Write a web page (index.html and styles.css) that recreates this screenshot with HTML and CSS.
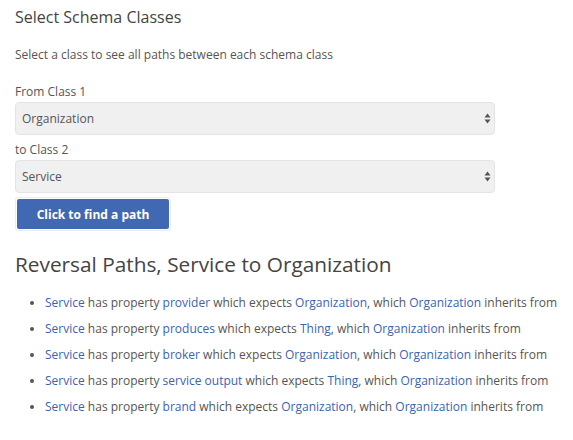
FILE: index.html
```html
<!DOCTYPE html>
<html>
<head>
<meta charset="utf-8">
<link rel="stylesheet" href="styles.css">
</head>
<body>
<div class="page">
  <h3 class="title">Select Schema Classes</h3>
  <p class="intro">Select a class to see all paths between each schema class</p>
  <label class="lbl">From Class 1</label>
  <div class="sel-wrap">
    <select class="sel"><option>Organization</option></select>
    <svg class="arrows" width="7" height="11" viewBox="0 0 7 11"><path d="M3.5 0.5 L6.5 4.5 H0.5 Z M3.5 10.5 L6.5 6.5 H0.5 Z" fill="#555"/></svg>
  </div>
  <label class="lbl lbl2">to Class 2</label>
  <div class="sel-wrap">
    <select class="sel"><option>Service</option></select>
    <svg class="arrows" width="7" height="11" viewBox="0 0 7 11"><path d="M3.5 0.5 L6.5 4.5 H0.5 Z M3.5 10.5 L6.5 6.5 H0.5 Z" fill="#555"/></svg>
  </div>
  <div class="btn-ring"><button class="btn">Click to find a path</button></div>
  <h2 class="paths-title">Reversal Paths, Service to Organization</h2>
  <ul class="paths">
    <li><a>Service</a> has property <a>provider</a> which expects <a>Organization</a>, which <a>Organization</a> inherits from</li>
    <li><a>Service</a> has property <a>produces</a> which expects <a>Thing</a>, which <a>Organization</a> inherits from</li>
    <li><a>Service</a> has property <a>broker</a> which expects <a>Organization</a>, which <a>Organization</a> inherits from</li>
    <li><a>Service</a> has property <a>service output</a> which expects <a>Thing</a>, which <a>Organization</a> inherits from</li>
    <li><a>Service</a> has property <a>brand</a> which expects <a>Organization</a>, which <a>Organization</a> inherits from</li>
  </ul>
</div>
</body>
</html>
```
FILE: styles.css
```css
html, body {
  margin: 0;
  padding: 0;
  background: #fff;
}
body {
  font-family: "Open Sans", "Liberation Sans", sans-serif;
  color: #555;
}
.page {
  padding: 0 15px;
  display: flex;
  flex-direction: column;
  align-items: flex-start;
}
.title {
  margin: 5px 0 0;
  font-size: 16px;
  font-weight: 400;
  line-height: 24px;
  color: #444;
}
.intro {
  margin: 17px 0 0;
  font-size: 12px;
  line-height: 18px;
  color: #555;
}
.lbl {
  margin-top: 19px;
  font-size: 12px;
  line-height: 18px;
  color: #555;
}
.lbl2 {
  margin-top: 6px;
}
.sel-wrap {
  position: relative;
  margin-top: 1px;
  width: 480px;
}
.sel {
  -webkit-appearance: none;
  appearance: none;
  display: block;
  width: 480px;
  height: 33px;
  margin: 0;
  padding: 0 6px;
  border: 1px solid #e4e4e4;
  border-radius: 4px;
  background: #f0f0f0;
  font-family: "Open Sans", "Liberation Sans", sans-serif;
  font-size: 12px;
  color: #555;
}
.arrows {
  position: absolute;
  right: 4px;
  top: 11px;
}
.btn-ring {
  margin-top: 4px;
  padding: 1px;
  border: 1px solid #e8ecf4;
  border-radius: 3px;
  display: flex;
}
.btn {
  width: 152px;
  height: 30px;
  border: none;
  border-radius: 2px;
  background: #4169b3;
  color: #fff;
  font-family: "Open Sans", "Liberation Sans", sans-serif;
  font-size: 12px;
  font-weight: 700;
  padding: 0;
}
.paths-title {
  margin: 18px 0 0;
  font-size: 20.8px;
  font-weight: 400;
  line-height: 30px;
  color: #444;
}
.paths {
  margin: 11px 0 0;
  padding: 0 0 0 30px;
  font-size: 12px;
  line-height: 26px;
  color: #555;
}
.paths li {
  white-space: nowrap;
}
.paths a {
  color: #3b63b0;
}
```
